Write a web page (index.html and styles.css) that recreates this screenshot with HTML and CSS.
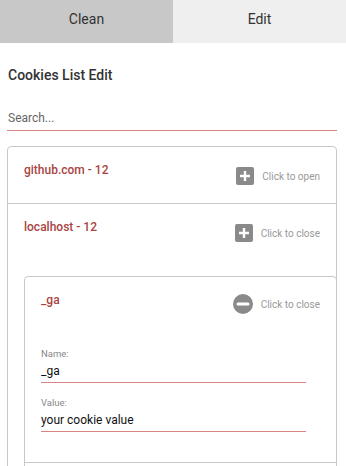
FILE: index.html
```html
<!DOCTYPE html>
<html lang="en">
<head>
    <meta charset="UTF-8">
    <title>Cookies Edit</title>
    <link rel="stylesheet" href="styles.css">
</head>
<body>
<div class="tabs">
    <div class="tab tab-clean">Clean</div>
    <div class="tab tab-edit">Edit</div>
</div>

<div class="content">
    <h3 class="page-title">Cookies List Edit</h3>
    <input class="search" type="text" placeholder="Search...">

    <div class="card">
        <div class="item">
            <div class="item-head">
                <span class="item-title">github.com - 12</span>
                <span class="action">
                    <svg class="icon" width="18" height="18" viewBox="0 0 18 18">
                        <rect width="18" height="18" rx="2" fill="#8a8a8a"/>
                        <path d="M9 4v10M4 9h10" stroke="#fff" stroke-width="2.4"/>
                    </svg>
                    Click to open
                </span>
            </div>
        </div>

        <div class="item">
            <div class="item-head">
                <span class="item-title">localhost - 12</span>
                <span class="action">
                    <svg class="icon" width="18" height="18" viewBox="0 0 18 18">
                        <rect width="18" height="18" rx="2" fill="#8a8a8a"/>
                        <path d="M9 4v10M4 9h10" stroke="#fff" stroke-width="2.4"/>
                    </svg>
                    Click to close
                </span>
            </div>

            <div class="card card-inner">
                <div class="item">
                    <div class="item-head">
                        <span class="item-title">_ga</span>
                        <span class="action">
                            <svg class="icon" width="20" height="20" viewBox="0 0 20 20">
                                <circle cx="10" cy="10" r="10" fill="#8a8a8a"/>
                                <path d="M5 10h10" stroke="#fff" stroke-width="3" stroke-linecap="round"/>
                            </svg>
                            Click to close
                        </span>
                    </div>
                    <div class="item-body">
                        <label class="field">
                            <span class="field-label">Name:</span>
                            <input class="field-input" type="text" value="_ga">
                        </label>
                        <label class="field">
                            <span class="field-label">Value:</span>
                            <input class="field-input" type="text" value="your cookie value">
                        </label>
                    </div>
                </div>
                <div class="item item-next"></div>
            </div>
        </div>
    </div>
</div>
</body>
</html>
```

FILE: styles.css
```css
* {
    box-sizing: border-box;
}

body {
    margin: 0;
    font-family: Roboto, "Liberation Sans", sans-serif;
    color: #333;
    overflow: hidden;
}

.tabs {
    display: flex;
    height: 43px;
}

.tab {
    flex: 1;
    display: flex;
    align-items: center;
    justify-content: center;
    padding-bottom: 5px;
    font-size: 14px;
    color: #333;
}

.tab-clean {
    background: #c8c8c8;
}

.tab-edit {
    background: #efefef;
}

.content {
    padding: 0 9px 0 7px;
}

.page-title {
    margin: 24px 0 0 1px;
    font-size: 14px;
    line-height: 16px;
    font-weight: 500;
}

.search {
    display: block;
    width: 100%;
    height: 25px;
    margin-top: 23px;
    padding: 0 0 0 1px;
    border: 0;
    border-bottom: 1px solid #d98484;
    outline: none;
    font-family: inherit;
    font-size: 12px;
    color: #333;
    background: transparent;
}

.search::placeholder {
    color: #666;
}

.card {
    margin-top: 15px;
    border: 1px solid #c8c8c8;
    border-radius: 4px;
}

.card-inner {
    margin: 16px -1px 0 16px;
}

.item + .item {
    border-top: 1px solid #c8c8c8;
}

.item-next {
    height: 40px;
}

.item-head {
    display: flex;
    justify-content: space-between;
    align-items: flex-start;
    padding: 13px 16px 17px;
}

.item-title {
    font-size: 12px;
    line-height: 20px;
    font-weight: 500;
    color: #a94442;
}

.action {
    display: flex;
    align-items: center;
    height: 20px;
    margin-top: 6px;
    font-size: 10px;
    color: #999;
}

.icon {
    margin-right: 8px;
}

.card-inner .action {
    margin-top: 4px;
}

.item-body {
    padding: 17px 30px 30px 16px;
}

.field {
    display: block;
}

.field + .field {
    margin-top: 14px;
}

.field-label {
    display: block;
    font-size: 9.5px;
    line-height: 12px;
    color: #888;
}

.field-input {
    display: block;
    width: 100%;
    height: 23px;
    padding: 0;
    border: 0;
    border-bottom: 1px solid #d98484;
    outline: none;
    font-family: inherit;
    font-size: 12px;
    color: #111;
    background: transparent;
}
```
